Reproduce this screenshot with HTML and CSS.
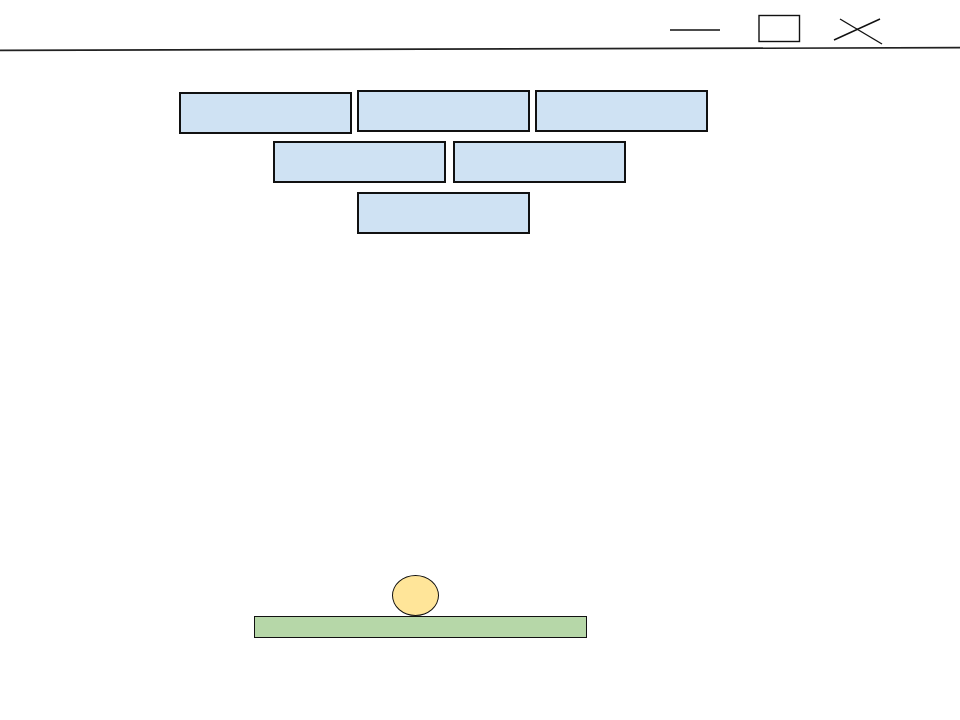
FILE: index.html
```html
<!DOCTYPE html>
<html lang="en">
<head>
  <meta charset="UTF-8">
  <meta name="viewport" content="width=device-width, initial-scale=1.0">
  <title>Brick Breaker</title>
  <link rel="stylesheet" href="styles.css">
</head>
<body>
  <header class="title-bar">
    <div class="window-controls">
      <svg class="ctrl ctrl-min" viewBox="0 0 52 32" aria-label="Minimize">
        <line x1="1" y1="17" x2="51" y2="17" />
      </svg>
      <svg class="ctrl ctrl-max" viewBox="0 0 42 32" aria-label="Maximize">
        <rect x="1" y="2.5" width="40.5" height="26" />
      </svg>
      <svg class="ctrl ctrl-close" viewBox="0 0 48 32" aria-label="Close">
        <line x1="6" y1="6" x2="48" y2="31" />
        <line x1="0" y1="27" x2="46" y2="6" />
      </svg>
    </div>
    <svg class="title-rule" viewBox="0 0 960 4" preserveAspectRatio="none">
      <line x1="0" y1="3.4" x2="960" y2="0.6" />
    </svg>
  </header>

  <main class="board">
    <div class="brick" style="left: 179px; top: 41px;"></div>
    <div class="brick" style="left: 357px; top: 39px;"></div>
    <div class="brick" style="left: 535px; top: 39px;"></div>
    <div class="brick" style="left: 273px; top: 90px;"></div>
    <div class="brick" style="left: 453px; top: 90px;"></div>
    <div class="brick" style="left: 357px; top: 141px;"></div>

    <div class="ball" style="left: 392px; top: 524px;"></div>
    <div class="paddle" style="left: 254px; top: 565px;"></div>
  </main>
</body>
</html>
```

FILE: styles.css
```css
:root {
	--brick-bg: #cfe2f3;
	--ball-bg: #ffe599;
	--paddle-bg: #b6d7a8;
	--ink: #111;
}

body {
	margin: 0;
	background: #fff;
	font-family: "Liberation Sans", Arial, sans-serif;
	overflow: hidden;
}

.title-bar {
	position: relative;
	height: 51px;
}

.window-controls {
	display: flex;
	justify-content: flex-end;
	align-items: flex-start;
	padding: 13px 78px 0 0;
}

.ctrl {
	height: 32px;
	fill: none;
	stroke: var(--ink);
	stroke-width: 1.4;
	overflow: visible;
}

.ctrl-min {
	width: 52px;
	margin-right: 37px;
}

.ctrl-max {
	width: 42px;
	margin-right: 34px;
}

.ctrl-close {
	width: 48px;
}

.title-rule {
	position: absolute;
	left: 0;
	top: 47px;
	width: 100%;
	height: 4px;
	overflow: visible;
	stroke: #222;
	stroke-width: 1.6;
}

.board {
	position: relative;
	height: 669px;
}

.brick {
	position: absolute;
	width: 169px;
	height: 38px;
	background: var(--brick-bg);
	border: 2px solid var(--ink);
}

.ball {
	position: absolute;
	width: 45px;
	height: 39px;
	border-radius: 50%;
	background: var(--ball-bg);
	border: 1px solid var(--ink);
}

.paddle {
	position: absolute;
	width: 331px;
	height: 20px;
	background: var(--paddle-bg);
	border: 1px solid var(--ink);
}
```
